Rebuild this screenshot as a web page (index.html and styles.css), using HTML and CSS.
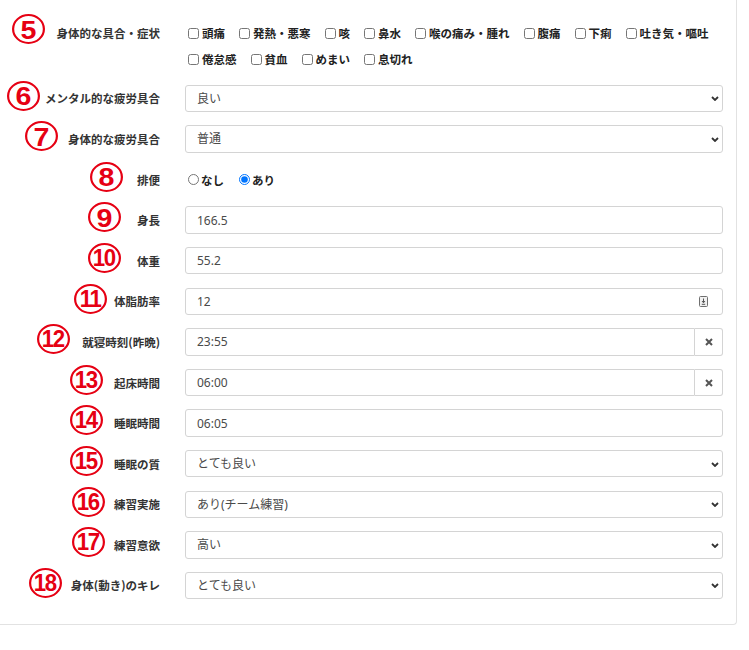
FILE: index.html
```html
<!DOCTYPE html>
<html lang="ja">
<head>
<meta charset="utf-8">
<title>体調入力</title>
<link rel="stylesheet" href="styles.css">
</head>
<body>
<div class="card">
  <div class="form">
    <div class="row row-check">
      <span class="num n5"><span class="d">5</span></span>
      <div class="label">身体的な具合・症状</div>
      <div class="checks">
        <label class="check"><input type="checkbox">頭痛</label>
        <label class="check"><input type="checkbox">発熱・悪寒</label>
        <label class="check"><input type="checkbox">咳</label>
        <label class="check"><input type="checkbox">鼻水</label>
        <label class="check"><input type="checkbox">喉の痛み・腫れ</label>
        <label class="check"><input type="checkbox">腹痛</label>
        <label class="check"><input type="checkbox">下痢</label>
        <label class="check"><input type="checkbox">吐き気・嘔吐</label>
        <label class="check"><input type="checkbox">倦怠感</label>
        <label class="check"><input type="checkbox">貧血</label>
        <label class="check"><input type="checkbox">めまい</label>
        <label class="check"><input type="checkbox">息切れ</label>
      </div>
    </div>

    <div class="row">
      <span class="num n6"><span class="d">6</span></span>
      <div class="label">メンタル的な疲労具合</div>
      <div class="select-wrap">
        <select class="field"><option>良い</option></select>
        <svg class="chev" width="8" height="5" viewBox="0 0 8 5"><path d="M1 1 L4 4 L7 1" fill="none" stroke="#333" stroke-width="1.8"/></svg>
      </div>
    </div>

    <div class="row">
      <span class="num n7"><span class="d">7</span></span>
      <div class="label">身体的な疲労具合</div>
      <div class="select-wrap">
        <select class="field"><option>普通</option></select>
        <svg class="chev" width="8" height="5" viewBox="0 0 8 5"><path d="M1 1 L4 4 L7 1" fill="none" stroke="#333" stroke-width="1.8"/></svg>
      </div>
    </div>

    <div class="row">
      <span class="num n8"><span class="d">8</span></span>
      <div class="label">排便</div>
      <div class="checks radios">
        <label class="check"><input type="radio" name="b">なし</label>
        <label class="check"><input type="radio" name="b" checked>あり</label>
      </div>
    </div>

    <div class="row">
      <span class="num n9"><span class="d">9</span></span>
      <div class="label">身長</div>
      <input class="field" type="text" value="166.5">
    </div>

    <div class="row">
      <span class="num n10"><span class="d dd">10</span></span>
      <div class="label">体重</div>
      <input class="field" type="text" value="55.2">
    </div>

    <div class="row">
      <span class="num n11"><span class="d dd">11</span></span>
      <div class="label">体脂肪率</div>
      <div class="field numfield">
        <input class="bare" type="text" value="12">
        <svg class="spin" width="10" height="11" viewBox="0 0 10 11"><rect x="0.5" y="0.5" width="8" height="10" rx="1" fill="#f1f1f1" stroke="#6f6f6f"/><path d="M4.5 2.5 V6.5 M3 5 L4.5 6.8 L6 5 M2.8 8.3 H6.2" fill="none" stroke="#555" stroke-width="1"/></svg>
      </div>
    </div>

    <div class="row">
      <span class="num n12"><span class="d dd">12</span></span>
      <div class="label">就寝時刻(昨晩)</div>
      <div class="group">
        <input class="field" type="text" value="23:55">
        <span class="addon"><svg width="8" height="8" viewBox="0 0 8 8"><path d="M1 1 L7 7 M7 1 L1 7" stroke="#555" stroke-width="2"/></svg></span>
      </div>
    </div>

    <div class="row">
      <span class="num n13"><span class="d dd">13</span></span>
      <div class="label">起床時間</div>
      <div class="group">
        <input class="field" type="text" value="06:00">
        <span class="addon"><svg width="8" height="8" viewBox="0 0 8 8"><path d="M1 1 L7 7 M7 1 L1 7" stroke="#555" stroke-width="2"/></svg></span>
      </div>
    </div>

    <div class="row">
      <span class="num n14"><span class="d dd">14</span></span>
      <div class="label">睡眠時間</div>
      <input class="field" type="text" value="06:05">
    </div>

    <div class="row">
      <span class="num n15"><span class="d dd">15</span></span>
      <div class="label">睡眠の質</div>
      <div class="select-wrap">
        <select class="field"><option>とても良い</option></select>
        <svg class="chev" width="8" height="5" viewBox="0 0 8 5"><path d="M1 1 L4 4 L7 1" fill="none" stroke="#333" stroke-width="1.8"/></svg>
      </div>
    </div>

    <div class="row">
      <span class="num n16"><span class="d dd">16</span></span>
      <div class="label">練習実施</div>
      <div class="select-wrap">
        <select class="field"><option>あり(チーム練習)</option></select>
        <svg class="chev" width="8" height="5" viewBox="0 0 8 5"><path d="M1 1 L4 4 L7 1" fill="none" stroke="#333" stroke-width="1.8"/></svg>
      </div>
    </div>

    <div class="row">
      <span class="num n17"><span class="d dd">17</span></span>
      <div class="label">練習意欲</div>
      <div class="select-wrap">
        <select class="field"><option>高い</option></select>
        <svg class="chev" width="8" height="5" viewBox="0 0 8 5"><path d="M1 1 L4 4 L7 1" fill="none" stroke="#333" stroke-width="1.8"/></svg>
      </div>
    </div>

    <div class="row">
      <span class="num n18"><span class="d dd">18</span></span>
      <div class="label">身体(動き)のキレ</div>
      <div class="select-wrap">
        <select class="field"><option>とても良い</option></select>
        <svg class="chev" width="8" height="5" viewBox="0 0 8 5"><path d="M1 1 L4 4 L7 1" fill="none" stroke="#333" stroke-width="1.8"/></svg>
      </div>
    </div>
  </div>
</div>
</body>
</html>
```

FILE: styles.css
```css
html, body {
  margin: 0;
  background: #fff;
}

body {
  font-family: "Noto Sans", "Noto Sans CJK JP", sans-serif;
  color: #333;
}

.card {
  width: 737px;
  box-sizing: border-box;
  border-right: 1px solid #e2e2e2;
  border-bottom: 1px solid #e2e2e2;
  border-bottom-right-radius: 4px;
  padding: 20px 13px 25px 0;
}

.form {
  display: flex;
  flex-direction: column;
  gap: 13.3px;
}

.row {
  position: relative;
  display: grid;
  grid-template-columns: 160px 1fr;
  column-gap: 25px;
  align-items: center;
  height: 27.3px;
}

.row-check {
  height: auto;
  align-items: start;
  margin-bottom: -0.6px;
}

.label {
  text-align: right;
  font-family: "Noto Sans CJK JP", sans-serif;
  font-weight: 700;
  font-size: 11.5px;
  line-height: 26px;
  color: #333;
  white-space: nowrap;
}

.checks {
  display: flex;
  flex-wrap: wrap;
  column-gap: 14px;
  padding-left: 3px;
}

.check {
  display: inline-flex;
  align-items: center;
  line-height: 26px;
  font-family: "Noto Sans CJK JP", sans-serif;
  font-weight: 700;
  font-size: 11.5px;
  color: #222;
  white-space: nowrap;
}

.check input {
  width: 11px;
  height: 11px;
  margin: 0 3px 0 0;
}

.radios {
  column-gap: 15px;
}

.radios .check input {
  width: 11px;
  height: 11px;
  margin: 0 2px 0 0;
}

.field {
  width: 100%;
  height: 27.3px;
  box-sizing: border-box;
  border: 1px solid #d4d4d4;
  border-radius: 3px;
  padding: 0 11px;
  font-family: "Noto Sans", "Noto Sans CJK JP", sans-serif;
  font-size: 12px;
  color: #4a4a4a;
  background: #fff;
  outline: none;
  margin: 0;
}

select.field {
  appearance: none;
  -webkit-appearance: none;
}

.select-wrap {
  position: relative;
}

.chev {
  position: absolute;
  right: 4px;
  top: 50%;
  margin-top: -2px;
  pointer-events: none;
}

.numfield {
  display: flex;
  align-items: center;
  padding-right: 13px;
}

.bare {
  flex: 1;
  border: 0;
  padding: 0;
  margin: 0;
  outline: none;
  font-family: inherit;
  font-size: 12px;
  color: #4a4a4a;
  background: transparent;
}

.spin {
  display: block;
}

.group {
  display: flex;
}

.group .field {
  flex: 1;
  border-radius: 3px 0 0 3px;
}

.addon {
  width: 28px;
  height: 27.3px;
  box-sizing: border-box;
  border: 1px solid #d4d4d4;
  border-left: 0;
  border-radius: 0 3px 3px 0;
  display: flex;
  align-items: center;
  justify-content: center;
  background: #fff;
}

/* red circled annotation numbers */
.num {
  position: absolute;
  top: -4px;
  width: 30px;
  height: 30px;
  box-sizing: border-box;
  border: 2.6px solid #e60013;
  border-radius: 50%;
  display: flex;
  align-items: center;
  justify-content: center;
  transform: scaleX(1.1);
  transform-origin: left center;
  color: #e60013;
  font-family: "Liberation Sans", Arial, sans-serif;
  font-weight: 700;
  font-size: 26px;
  line-height: 1;
}

.num .d {
  display: block;
  margin-top: 1px;
}

.num .dd {
  font-size: 23px;
  letter-spacing: -1.5px;
  transform: scaleX(0.88);
  margin-left: -1px;
}

.n5 { left: 12px; top: -6px; }
.n6 { left: 7px; }
.n7 { left: 25px; }
.n8 { left: 90px; }
.n9 { left: 88px; }
.n10 { left: 88px; }
.n11 { left: 74px; }
.n12 { left: 37px; }
.n13 { left: 70px; }
.n14 { left: 70px; }
.n15 { left: 70px; }
.n16 { left: 72px; }
.n17 { left: 72px; }
.n18 { left: 29px; }
```
